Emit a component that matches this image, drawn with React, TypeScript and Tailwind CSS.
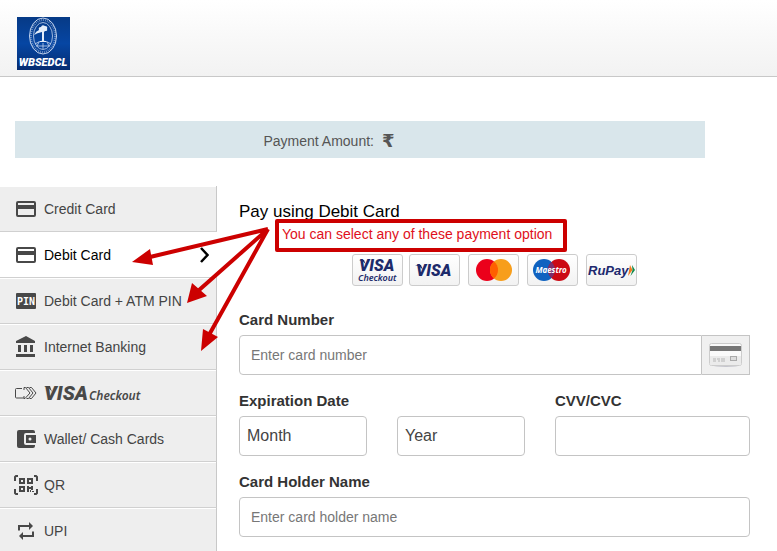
import type { ReactNode } from "react";
import clsx from "clsx";

function CardIcon() {
  return (
    <svg width="20" height="16" viewBox="0 0 20 16" fill="#484848" aria-hidden="true">
      <path
        fillRule="evenodd"
        d="M2 0h16a2 2 0 0 1 2 2v12a2 2 0 0 1-2 2H2a2 2 0 0 1-2-2V2a2 2 0 0 1 2-2Zm0 2v2h16V2ZM2 8v6h16V8Z"
      />
    </svg>
  );
}

function PinIcon() {
  return (
    <svg width="20" height="16" viewBox="0 0 20 16" aria-hidden="true">
      <rect width="20" height="16" rx="1" fill="#484848" />
      <text
        x="10"
        y="12"
        textAnchor="middle"
        fill="#fff"
        className="font-['DejaVu_Sans_Mono',monospace] text-[10px] font-bold"
      >
        PIN
      </text>
    </svg>
  );
}

function BankIcon() {
  return (
    <svg width="20" height="21" viewBox="0 0 20 21" fill="#484848" aria-hidden="true">
      <path d="M10 0 0 5v2h19V5ZM2 9h3v7H2ZM8 9h3v7H8ZM14 9h3v7h-3ZM0 18h19v3H0Z" />
    </svg>
  );
}

function CheckoutIcon() {
  return (
    <svg width="22" height="14" viewBox="0 0 22 14" fill="none" stroke="#484848" aria-hidden="true">
      <path d="M7 2.500H1.500q-1 0-1 1v7.500q0 1 1 1H9M9 4V1.500h1.500L15 7l-5 5.500H9V10" />
      <path d="M11.500 1.500h2L18 7l-4.500 5.500h-2M14.500 1.500h2L21 7l-4.500 5.500h-2" />
    </svg>
  );
}

function WalletIcon() {
  return (
    <svg width="19" height="18" viewBox="0 0 19 18" fill="#484848" aria-hidden="true">
      <path d="M18 15v1a2 2 0 0 1-2 2H2a2 2 0 0 1-2-2V2a2 2 0 0 1 2-2h14a2 2 0 0 1 2 2v1H9a2 2 0 0 0-2 2v8a2 2 0 0 0 2 2Z" />
      <path fillRule="evenodd" d="M9 5h10v8H9Zm4 2.500a1.500 1.500 0 1 0 0 3 1.500 1.500 0 0 0 0-3Z" />
    </svg>
  );
}

function QrIcon() {
  return (
    <svg width="24" height="20" viewBox="0 0 24 20" aria-hidden="true">
      <g fill="none" stroke="#484848" strokeWidth="2">
        <path d="M4 1H2L1 2v4M20 1h2l1 1v4M4 19H2l-1-1v-4M20 19h2l1-1v-4" />
        <path d="M6 4h4v4H6ZM14 4h4v4h-4ZM6 12h4v4H6Z" />
      </g>
      <path
        fill="#484848"
        d="M13 11h2v6h-2ZM15 12h2v2h-2ZM17 11h2v4h-2ZM16 15h1v2h-1ZM18 16h2v1h-2Z"
      />
    </svg>
  );
}

function UpiIcon() {
  return (
    <svg width="18" height="18" viewBox="0 0 18 18" aria-hidden="true">
      <path d="M2 8.500V4h11M16 9.500V14H5" fill="none" stroke="#484848" strokeWidth="2" />
      <path d="M12 0v8l4-4ZM6 10v8l-4-4Z" fill="#484848" />
    </svg>
  );
}

function VisaCheckoutMark() {
  return (
    <svg width="104" height="26" viewBox="0 0 104 26" fill="#484848" role="img" aria-label="VISA Checkout">
      <path d="M0 6h6l2 6Q6 8 0 6Z" />
      <text x="0" y="20" className="font-['Roboto',sans-serif] text-[20px] font-black italic">
        VISA
      </text>
      <text x="45" y="20" className="font-['Noto_Sans',sans-serif] text-[12px] font-semibold italic">
        Checkout
      </text>
    </svg>
  );
}

const METHODS: { id: string; icon: ReactNode; label: ReactNode }[] = [
  { id: "credit", icon: <CardIcon />, label: "Credit Card" },
  { id: "debit", icon: <CardIcon />, label: "Debit Card" },
  { id: "pin", icon: <PinIcon />, label: "Debit Card + ATM PIN" },
  { id: "bank", icon: <BankIcon />, label: "Internet Banking" },
  { id: "visa", icon: <CheckoutIcon />, label: <VisaCheckoutMark /> },
  { id: "wallet", icon: <WalletIcon />, label: "Wallet/ Cash Cards" },
  { id: "qr", icon: <QrIcon />, label: "QR" },
  { id: "upi", icon: <UpiIcon />, label: "UPI" },
];

function MethodButton({ icon, label, active }: { icon: ReactNode; label: ReactNode; active: boolean }) {
  return (
    <button
      type="button"
      aria-current={active}
      className={clsx(
        "flex h-[46px] w-full items-center gap-1 border-b border-b-[#d0d0d0] pl-3 text-left text-sm",
        active
          ? "bg-white text-black"
          : "border-r border-r-[#c8c8c8] bg-[#eeeeee] text-[#444444] shadow-[inset_0_1px_0_#fff]",
      )}
    >
      <span className="flex w-7 shrink-0 justify-center">{icon}</span>
      {label}
      {active && (
        <svg className="mr-2 ml-auto" width="9" height="16" viewBox="0 0 9 16" fill="none" aria-hidden="true">
          <path d="m1 1 6.500 7L1 15" stroke="#000" strokeWidth="2.500" />
        </svg>
      )}
    </button>
  );
}

function BrandLogo() {
  return (
    <svg width="53" height="53" viewBox="0 0 53 53" role="img" aria-label="WBSEDCL">
      <defs>
        <linearGradient id="brand" x1="0" y1="0" x2="0" y2="1">
          <stop offset="0" stopColor="#063a86" />
          <stop offset="0.500" stopColor="#0646a3" />
          <stop offset="1" stopColor="#052c71" />
        </linearGradient>
      </defs>
      <rect width="53" height="53" fill="url(#brand)" />
      <g fill="none" stroke="#c6d6ef">
        <ellipse cx="26" cy="19" rx="13.500" ry="18" />
        <ellipse cx="26" cy="19" rx="12" ry="16" strokeWidth="2" strokeDasharray="1 1" opacity="0.500" />
        <ellipse cx="26" cy="19" rx="9.500" ry="13.500" strokeWidth="0.800" />
        <path d="M18 27q8-6 16 0M19 29h14M26 26v6M22 25l-2 4M30 25l2 4" strokeWidth="0.800" />
      </g>
      <path
        d="M22 13q-1-3 2-3 1-3 4-1 3 0 2 3 1 2-2 2l-1 1v9h2v1h-6v-1h2v-9q-5 1-8 3 2-4 5-5Z"
        fill="#e4edf9"
      />
      <text
        x="26"
        y="49"
        textAnchor="middle"
        fill="#fff"
        className="font-['Roboto',sans-serif] text-[11px] font-black italic"
      >
        WBSEDCL
      </text>
    </svg>
  );
}

function Badge({ name, children }: { name: string; children: ReactNode }) {
  return (
    <span className="rounded-[3px] border border-[#cccccc] bg-linear-to-b from-white to-[#f2f2f2]">
      <svg width="49" height="30" viewBox="0 0 49 30" role="img" aria-label={name}>
        {children}
      </svg>
    </span>
  );
}

function CardBrands() {
  return (
    <div className="flex justify-center gap-2">
      <div className="flex gap-1.5">
        <Badge name="Visa Checkout">
          <path d="M6 5h5l2 5Q11 6 6 5Z" fill="#1d2b6b" />
          <text x="6" y="16" fill="#1d2b6b" className="font-['Roboto',sans-serif] text-[16px] font-black italic">
            VISA
          </text>
          <text x="5" y="26" fill="#1d2b6b" className="font-['Noto_Sans',sans-serif] text-[9px] font-semibold italic">
            Checkout
          </text>
        </Badge>
        <Badge name="Visa">
          <path d="M5 10h6l2 5Q10 11 5 10Z" fill="#1d2b6b" />
          <text x="6" y="21" fill="#1d2b6b" className="font-['Roboto',sans-serif] text-[16px] font-black italic">
            VISA
          </text>
        </Badge>
      </div>
      <Badge name="Mastercard">
        <circle cx="18" cy="15" r="11" fill="#eb001b" />
        <circle cx="32" cy="15" r="11" fill="#f79e1b" />
        <path d="M25 6.500a11 11 0 0 1 0 17 11 11 0 0 1 0-17Z" fill="#ff5f00" />
      </Badge>
      <Badge name="Maestro">
        <circle cx="16" cy="15" r="11" fill="#0f62c0" />
        <circle cx="31" cy="15" r="11" fill="#cc0a14" />
        <path d="M23.500 7a11 11 0 0 1 0 16 11 11 0 0 1 0-16Z" fill="#7d2f6c" />
        <text
          x="23"
          y="18"
          textAnchor="middle"
          fill="#fff"
          className="font-['Noto_Sans',sans-serif] text-[8px] font-bold italic"
        >
          Maestro
        </text>
      </Badge>
      <Badge name="RuPay">
        <path d="m43 10 2.500 5-4.500 6Z" fill="#f47920" />
        <path d="m45 10 3 5-4.500 6 2-6Z" fill="#128a4b" />
        <text
          x="1"
          y="20"
          fill="#20296e"
          className="font-['Liberation_Sans',Arial,sans-serif] text-[13px] font-bold italic"
        >
          RuPay
        </text>
      </Badge>
    </div>
  );
}

function CardArt() {
  return (
    <svg width="34" height="24" viewBox="0 0 34 24" aria-hidden="true">
      <ellipse cx="17" cy="22.500" rx="13" ry="1.500" fill="#c4c4cc" />
      <rect x="0.500" y="0.500" width="32" height="22" rx="2" fill="#fafafa" stroke="#cccccc" />
      <path d="M1 13h31v8q0 1-1 1H2q-1 0-1-1Z" fill="#ebebeb" />
      <path d="M1 3h31v5H1Z" fill="#777" />
      <path d="M4 16h3M8 16h3M12 16h4M4 18h3M9 18h2M12 18h4" stroke="#b5b5b5" />
      <rect x="21.500" y="13.500" width="6" height="4" fill="#ddd" stroke="#aaa" />
    </svg>
  );
}

function Arrows() {
  return (
    <svg
      className="pointer-events-none absolute top-[220px] left-[125px]"
      width="150"
      height="135"
      viewBox="125 220 150 135"
      aria-hidden="true"
    >
      <path d="M268 229 150 257M268 229 198 291M268 229 209 335" stroke="#cc0000" strokeWidth="4" />
      <path
        d="M132 262 150 249 153 265ZM187 303 192 283 207 296ZM201 351 203 329 218 337Z"
        fill="#cc0000"
      />
    </svg>
  );
}

const label = "mb-[5px] block text-[15px] leading-5 font-bold text-[#333333]";
const field =
  "block h-10 w-full min-w-0 rounded border border-[#c4c4c4] bg-white px-[11px] text-sm text-[#444444] placeholder:text-[#777777]";
const select =
  "block h-10 w-full appearance-none rounded border border-[#c4c4c4] bg-white px-[7px] text-base text-[#444444]";

function DebitCardForm() {
  return (
    <form>
      <label htmlFor="number" className={label}>
        Card Number
      </label>
      <div className="flex">
        <input id="number" placeholder="Enter card number" className={clsx(field, "rounded-r-none")} />
        <span className="flex w-12 shrink-0 items-center justify-center border border-l-0 border-[#c4c4c4] bg-[#f0f0f0]">
          <CardArt />
        </span>
      </div>

      <div className="mt-4 grid grid-cols-[128fr_128fr_195fr] items-end gap-[30px]">
        <div>
          <label htmlFor="month" className={label}>
            Expiration Date
          </label>
          <select id="month" className={select}>
            <option>Month</option>
          </select>
        </div>
        <select aria-label="Expiration year" className={select}>
          <option>Year</option>
        </select>
        <div>
          <label htmlFor="cvv" className={label}>
            CVV/CVC
          </label>
          <input id="cvv" className={field} />
        </div>
      </div>

      <label htmlFor="holder" className={clsx(label, "mt-4")}>
        Card Holder Name
      </label>
      <input id="holder" placeholder="Enter card holder name" className={field} />
    </form>
  );
}

export default function App() {
  return (
    <div className="relative bg-white font-['Liberation_Sans',Arial,sans-serif]">
      <header className="border-b border-[#c8c8c8] bg-linear-to-b from-white to-[#f2f2f2] px-[17px] pt-[17px] pb-1.5">
        <BrandLogo />
      </header>

      <div className="mt-11 mr-[72px] ml-[15px] flex h-[37px] items-center justify-center bg-[#d9e6eb] pt-0.5 pr-[62px] text-sm text-[#555555]">
        Payment Amount:
        <span className="ml-2 font-['DejaVu_Sans',sans-serif] text-lg leading-5 font-bold">₹</span>
      </div>

      <div className="mt-7 flex">
        <nav aria-label="Payment methods" className="w-[217px] shrink-0">
          {METHODS.map(m => (
            <MethodButton key={m.id} icon={m.icon} label={m.label} active={m.id === "debit"} />
          ))}
        </nav>
        <main className="min-w-0 flex-1 pt-4 pr-[27px] pl-[22px]">
          <h1 className="mb-8 text-[17px] leading-5 text-black">Pay using Debit Card</h1>
          <CardBrands />
          <div className="pt-6">
            <DebitCardForm />
          </div>
        </main>
      </div>

      <p className="absolute top-[219px] left-[275px] h-[33px] w-[292px] rounded-xs border-4 border-[#cc0000] bg-white pl-[3px] text-sm leading-[22px] text-[#e01020]">
        You can select any of these payment option
      </p>
      <Arrows />
    </div>
  );
}
